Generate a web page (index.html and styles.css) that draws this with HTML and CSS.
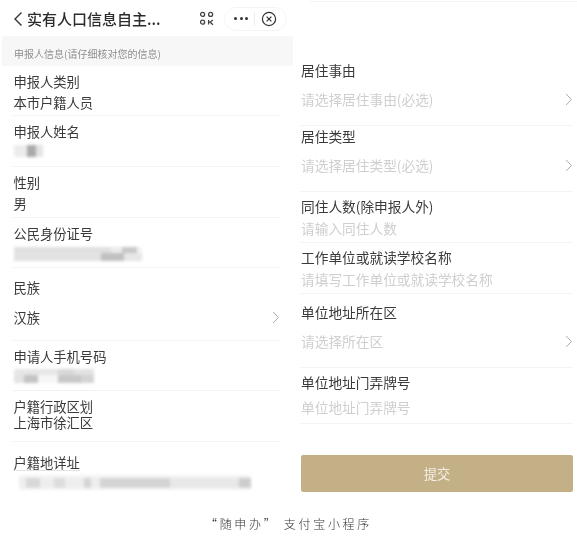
FILE: index.html
```html
<!DOCTYPE html>
<html lang="zh-CN">
<head>
<meta charset="utf-8">
<title>实有人口信息自主申报</title>
<link rel="stylesheet" href="styles.css">
</head>
<body>
<main class="page">
  <div class="columns">
    <section class="left">
      <header class="nav">
        <svg class="back" width="10" height="16" viewBox="0 0 10 16"><path d="M8.5 1.5 2 8l6.5 6.5" fill="none" stroke="#333" stroke-width="1.4"/></svg>
        <h1 class="title">实有人口信息自主...</h1>
        <svg class="scan" width="16" height="15" viewBox="0 0 16 15" fill="none" stroke="#444" stroke-width="1.3">
          <circle cx="3.6" cy="3.4" r="2"/><circle cx="11.6" cy="3.4" r="2"/><circle cx="3.6" cy="11.2" r="2"/>
          <path d="M9.6 9v4.6M9.6 11.2h1.6l2.6-2.2M11.2 11.2l2.8 2.6"/>
        </svg>
        <div class="capsule">
          <span class="dots"><i></i><i></i><i></i></span>
          <span class="sep"></span>
          <svg width="16" height="16" viewBox="0 0 16 16" fill="none" stroke="#333" stroke-width="1.2"><circle cx="8" cy="8" r="6.6"/><path d="M5.6 5.6l4.8 4.8M10.4 5.6l-4.8 4.8"/></svg>
        </div>
      </header>
      <div class="band">申报人信息(请仔细核对您的信息)</div>
      <div class="field f51 first"><div class="label">申报人类别</div><div class="value">本市户籍人员</div></div>
      <div class="field f51"><div class="label">申报人姓名</div><div class="mask m-name"></div></div>
      <div class="field f51"><div class="label">性别</div><div class="value">男</div></div>
      <div class="field f50"><div class="label">公民身份证号</div><div class="mask m-id"></div></div>
      <div class="field f73 gap-l">
        <div class="label">民族</div>
        <div class="row"><span class="value">汉族</span><svg class="chev" width="8" height="13" viewBox="0 0 8 13"><path d="M1.2 1l5.2 5.5-5.2 5.5" fill="none" stroke="#aaa" stroke-width="1"/></svg></div>
      </div>
      <div class="field f50"><div class="label">申请人手机号码</div><div class="mask m-phone"></div></div>
      <div class="field f51 tight"><div class="label">户籍行政区划</div><div class="value">上海市徐汇区</div></div>
      <div class="field last"><div class="label">户籍地详址</div><div class="mask m-addr"></div></div>
    </section>
    <section class="right">
      <div class="topline"></div>
      <div class="field r-first r-pick"><div class="label">居住事由</div><div class="row"><span class="ph">请选择居住事由(必选)</span><svg class="chev" width="8" height="13" viewBox="0 0 8 13"><path d="M1.2 1l5.2 5.5-5.2 5.5" fill="none" stroke="#aaa" stroke-width="1"/></svg></div></div>
      <div class="field r-pick"><div class="label">居住类型</div><div class="row"><span class="ph">请选择居住类型(必选)</span><svg class="chev" width="8" height="13" viewBox="0 0 8 13"><path d="M1.2 1l5.2 5.5-5.2 5.5" fill="none" stroke="#aaa" stroke-width="1"/></svg></div></div>
      <div class="field r-text"><div class="label">同住人数(除申报人外)</div><div class="ph">请输入同住人数</div></div>
      <div class="field r-text"><div class="label">工作单位或就读学校名称</div><div class="ph">请填写工作单位或就读学校名称</div></div>
      <div class="field r-area"><div class="label">单位地址所在区</div><div class="row"><span class="ph">请选择所在区</span><svg class="chev" width="8" height="13" viewBox="0 0 8 13"><path d="M1.2 1l5.2 5.5-5.2 5.5" fill="none" stroke="#aaa" stroke-width="1"/></svg></div></div>
      <div class="field r-door"><div class="label">单位地址门弄牌号</div><div class="ph">单位地址门弄牌号</div></div>
      <button class="submit" type="button">提交</button>
    </section>
  </div>
  <p class="caption">“随申办” 支付宝小程序</p>
</main>
</body>
</html>
```
FILE: styles.css
```css
* { box-sizing: border-box; }
html, body { margin: 0; padding: 0; background: #fff; }
body { font-family: "Noto Sans CJK SC", "Liberation Sans", sans-serif; color: #3a3a3a; }
.page { width: 577px; height: 547px; overflow: hidden; filter: blur(0.35px); }
.columns { display: flex; height: 510px; }
.left { width: 293px; flex: none; }
.right { margin-left: 8px; width: 272px; flex: none; }

.nav { display: flex; align-items: center; height: 36px; padding: 1px 6px 0 13px; }
.back { flex: none; }
.title { margin: 0 0 0 4px; font-size: 15px; font-weight: 500; line-height: 20px; color: #2c2c2c; width: 137px; white-space: nowrap; }
.scan { margin-left: 36px; flex: none; }
.capsule { display: flex; align-items: center; margin-left: 9px; width: 63px; height: 24px; border: 1px solid #f4f4f4; border-radius: 12px; padding-left: 9px; }
.dots { display: flex; gap: 2.6px; width: 15px; }
.dots i { width: 3px; height: 3px; border-radius: 50%; background: #333; }
.sep { width: 1px; height: 14px; background: #ececec; margin: 0 6px 0 5px; }

.band { margin-left: 2px; height: 30px; background: #f7f7f7; padding: 9px 0 0 12px; font-size: 10px; line-height: 18px; color: #8f8f8f; }

.field { border-bottom: 1px solid #f3f3f3; margin: 0 13px; }
.left .field { padding-top: 5px; }
.left .label, .left .value { margin-left: 0.4px; }
.left .mask { margin-left: 1px; }
.label, .value, .ph { font-size: 13.3px; line-height: 21px; white-space: nowrap; }
.right .label, .right .ph { font-size: 13.7px; }
.label { color: #3a3a3a; }
.value { color: #3a3a3a; }
.ph { color: #cfcfcf; }
.f51 { height: 51px; }
.f50 { height: 50px; }
.f73 { height: 73px; }
.first { height: 50px; }
.gap-l { padding-top: 9px !important; }
.row { display: flex; align-items: center; justify-content: space-between; }
.gap-l .row { margin-top: 9px; }
.chev { flex: none; }
.tight { padding-top: 8px !important; }
.tight .label, .tight .value { line-height: 16px; }
.last { border: 0; padding-top: 10px !important; }
.last .label { text-decoration: underline; text-decoration-color: #e4e4e4; text-underline-offset: 2px; }

.mask { filter: blur(1.6px); }
.m-name { margin-top: 3px; width: 29px; height: 12px; background: linear-gradient(90deg, #ececec 0 45%, #aaa 45% 75%, #e4e4e4 75%); }
.m-id { margin-top: 3px; width: 128px; height: 14px; background: linear-gradient(90deg, #e2e2e2 0 68%, #c0c0c0 68% 86%, #e6e6e6 86%) bottom / 100% 60% no-repeat, linear-gradient(90deg, #e0e0e0 0 76%, #ececec 76% 84%, #c8c8c8 84% 96%, #f2f2f2 96%); }
.m-phone { margin-top: 2px; width: 80px; height: 14px; background: linear-gradient(90deg, #e4e4e4 0 12%, #c4c4c4 12% 30%, #f6f6f6 30% 55%, #c8c8c8 55% 84%, #d4d4d4 84%) bottom / 100% 60% no-repeat, linear-gradient(90deg, #e6e6e6 0 55%, #d8d8d8 55% 75%, #e2e2e2 75%); }
.m-addr { margin: 2px 0 0 6px !important; width: 232px; height: 15px; background: linear-gradient(90deg, #eee 0 3%, #d8d8d8 3% 9%, #eee 9% 15%, #dcdcdc 15% 20%, #eee 20% 28%, #d4d4d4 28% 31%, #eee 31% 35%, #d4d4d4 35% 65%, #e8e8e8 65% 95%, #cdcdcd 95%) center / 100% 65% no-repeat, #f4f4f4; }

.right .field { margin: 0; }
.topline { height: 2px; border-bottom: 1px solid #f3f3f3; margin: 0 -4px 0 9px; }
.r-pick { height: 66px; padding-top: 0; }
.r-first { height: 124px; padding-top: 58px; }
.r-pick .row { margin-top: 8px; }
.r-text { height: 51px; padding-top: 4px; }
.r-text .ph { margin-top: 1px; line-height: 21px; }
.r-area { height: 74px; padding-top: 8px; }
.r-area .row { margin-top: 8px; }
.r-door { height: 56px; padding-top: 4px; }
.r-door .ph { margin-top: 4px; }

.submit { display: block; width: 272px; height: 37px; margin-top: 31px; border: 0; border-radius: 2px; background: #c3b086; color: #f4efe4; font-family: inherit; font-size: 13.3px; padding: 0; }

.caption { margin: 6px 0 0; text-align: center; font-size: 12px; font-weight: 300; line-height: 16px; letter-spacing: 2.7px; color: #333; }
```
